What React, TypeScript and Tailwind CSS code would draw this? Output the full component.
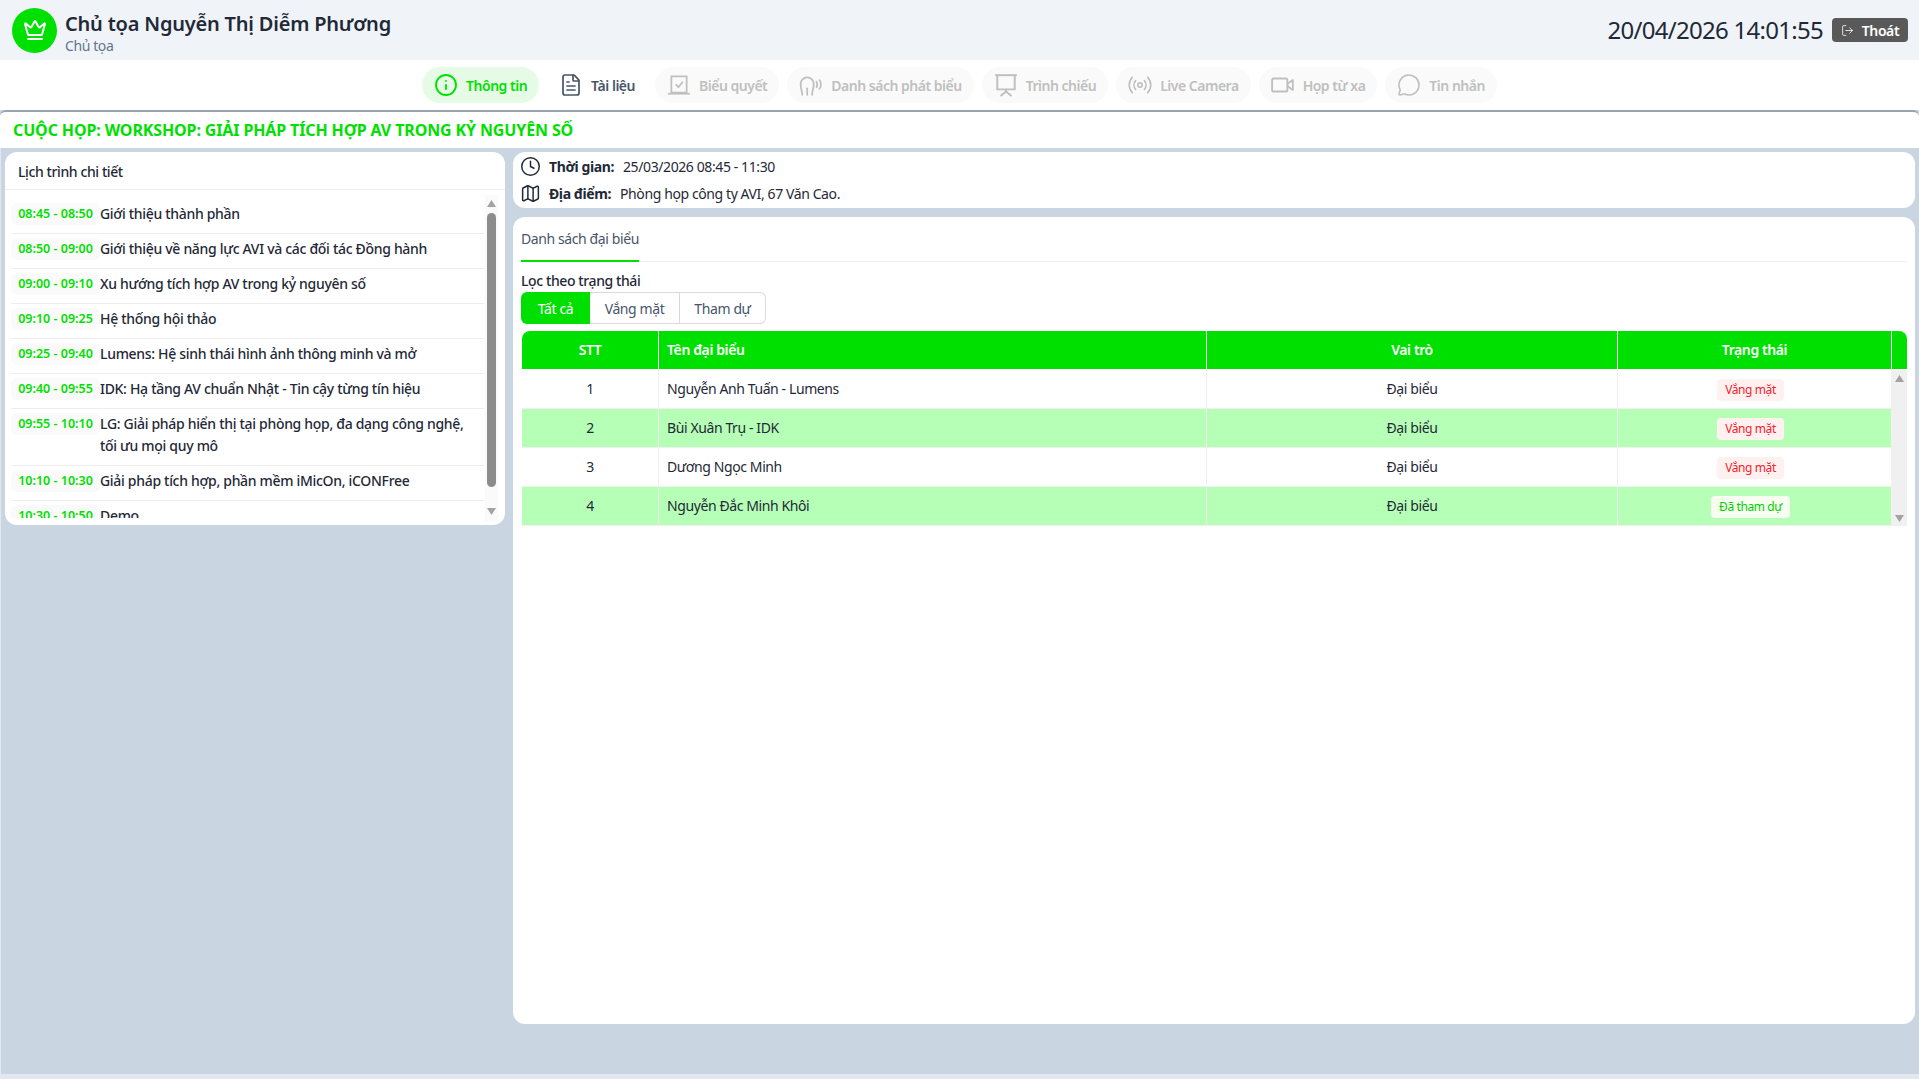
import { Clock, Crown, FileText, Info, LogOut, Map, MessageCircle } from "lucide-react";
import type { ReactNode } from "react";

const schedule = [
  { time: "08:45 - 08:50", title: "Giới thiệu thành phần" },
  { time: "08:50 - 09:00", title: "Giới thiệu về năng lực AVI và các đối tác Đồng hành" },
  { time: "09:00 - 09:10", title: "Xu hướng tích hợp AV trong kỷ nguyên số" },
  { time: "09:10 - 09:25", title: "Hệ thống hội thảo" },
  { time: "09:25 - 09:40", title: "Lumens: Hệ sinh thái hình ảnh thông minh và mở" },
  { time: "09:40 - 09:55", title: "IDK: Hạ tầng AV chuẩn Nhật - Tin cậy từng tín hiệu" },
  { time: "09:55 - 10:10", title: "LG: Giải pháp hiển thị tại phòng họp, đa dạng công nghệ, tối ưu mọi quy mô" },
  { time: "10:10 - 10:30", title: "Giải pháp tích hợp, phần mềm iMicOn, iCONFree" },
  { time: "10:30 - 10:50", title: "Demo" },
];

const delegates = [
  { id: 1, name: "Nguyễn Anh Tuấn - Lumens", attended: false },
  { id: 2, name: "Bùi Xuân Trụ - IDK", attended: false },
  { id: 3, name: "Dương Ngọc Minh", attended: false },
  { id: 4, name: "Nguyễn Đắc Minh Khôi", attended: true },
];

function VoteIcon() {
  return (
    <svg width="24" height="24" viewBox="0 0 22 22" fill="none" stroke="currentColor" strokeWidth="1.6">
      <path d="M4 3h14v15H4z" />
      <path d="M1 19h20" />
      <path d="M8 10.5l2.5 2.5L14.5 8" />
    </svg>
  );
}

function SpeakerIcon() {
  return (
    <svg width="24" height="24" viewBox="0 0 22 22" fill="none" stroke="currentColor" strokeWidth="1.6" strokeLinecap="round">
      <path d="M3 20c0-3-1.5-5-1.5-10a6 6 0 0 1 12 0c0 4-1.5 6-1.5 10" />
      <path d="M7.5 14v6" />
      <path d="M16 8c1 1.300 1 3.700 0 5" />
      <path d="M18.800 6.500c1.700 2.200 1.700 5.800 0 8" />
    </svg>
  );
}

function ScreenIcon() {
  return (
    <svg width="24" height="24" viewBox="0 0 22 22" fill="none" stroke="currentColor" strokeWidth="1.800">
      <path d="M1 2h20" />
      <path d="M3 2v13h16V2" />
      <path d="M11 15v2l-5 4M11 17l5 4" />
    </svg>
  );
}

function CameraIcon() {
  return (
    <svg width="24" height="24" viewBox="0 0 22 22" fill="none" stroke="currentColor" strokeWidth="1.500" strokeLinecap="round">
      <circle cx="11" cy="11" r="2" />
      <path d="M7 7a6 6 0 0 0 0 8M15 7a6 6 0 0 1 0 8" />
      <path d="M4 4a10 10 0 0 0 0 14M18 4a10 10 0 0 1 0 14" />
    </svg>
  );
}

function VideoIcon() {
  return (
    <svg width="24" height="24" viewBox="0 0 22 22" fill="none" stroke="currentColor" strokeWidth="1.700" strokeLinejoin="round">
      <rect x="1" y="5" width="14" height="12" rx="1.500" />
      <path d="M15 10l5-3.500v9L15 12" />
    </svg>
  );
}

function NavPill({ icon, label, state }: { icon: ReactNode; label: string; state: "active" | "normal" | "disabled" }) {
  const tone =
    state === "active"
      ? "bg-[#e6fbe6] text-[#00e000]"
      : state === "normal"
        ? "text-[#475569]"
        : "bg-[#fafafa] text-[#bfbfbf]";
  return (
    <div className={`flex h-9 items-center gap-2 rounded-[18px] px-3 text-[14px] font-semibold tracking-[-0.035em] whitespace-nowrap ${tone}`}>
      {icon}
      <span>{label}</span>
    </div>
  );
}

function ScrollArrow({ down }: { down?: boolean }) {
  return (
    <svg width="9" height="7" viewBox="0 0 9 7" className="fill-[#a3a3a3]">
      <path d={down ? "M0 0h9L4.500 7z" : "M4.500 0L9 7H0z"} />
    </svg>
  );
}

export default function App() {
  return (
    <div className="flex h-[1079px] w-full flex-col overflow-hidden bg-[#c9d5e1] font-['Noto_Sans',sans-serif] tracking-[-0.025em] text-[#1f2937]">
      {/* Top header */}
      <header className="flex h-[60px] shrink-0 items-center justify-between bg-[#f0f4f9] pr-[11px] pl-3">
        <div className="flex items-center gap-2">
          <div className="flex h-[45px] w-[45px] items-center justify-center rounded-full bg-[#00e000]">
            <Crown size={24} className="text-white" strokeWidth={2} />
          </div>
          <div className="pt-[5px]">
            <div className="text-[20px] leading-[26px] font-semibold tracking-[-0.01em] text-[#1f2937]">Chủ tọa Nguyễn Thị Diễm Phương</div>
            <div className="text-[14px] leading-[18px] text-[#64748b]">Chủ tọa</div>
          </div>
        </div>
        <div className="flex items-center gap-[9px]">
          <span className="text-[24px] leading-8 tracking-[-0.03em] text-[#1f2937]">20/04/2026 14:01:55</span>
          <div className="flex h-6 w-[76px] items-center justify-center gap-2 rounded bg-[#595959] text-[14px] font-semibold text-white">
            <LogOut size={13} strokeWidth={1.500} />
            <span>Thoát</span>
          </div>
        </div>
      </header>

      {/* Tabs */}
      <nav className="flex h-[50px] shrink-0 items-center justify-center gap-2 bg-white">
        <NavPill state="active" label="Thông tin" icon={<Info size={24} strokeWidth={1.800} />} />
        <NavPill state="normal" label="Tài liệu" icon={<FileText size={24} strokeWidth={1.700} />} />
        <NavPill state="disabled" label="Biểu quyết" icon={<VoteIcon />} />
        <NavPill state="disabled" label="Danh sách phát biểu" icon={<SpeakerIcon />} />
        <NavPill state="disabled" label="Trình chiếu" icon={<ScreenIcon />} />
        <NavPill state="disabled" label="Live Camera" icon={<CameraIcon />} />
        <NavPill state="disabled" label="Họp từ xa" icon={<VideoIcon />} />
        <NavPill state="disabled" label="Tin nhắn" icon={<MessageCircle size={24} strokeWidth={1.600} />} />
      </nav>

      {/* Meeting title */}
      <div className="flex h-[38px] shrink-0 items-center rounded-t-md border-t-2 border-[#9aa3af] bg-white pl-[13px] text-[16px] font-bold tracking-[-0.008em] text-[#00e000]">
        CUỘC HỌP: WORKSHOP: GIẢI PHÁP TÍCH HỢP AV TRONG KỶ NGUYÊN SỐ
      </div>

      <div className="flex flex-1 items-start gap-2 border-l border-[#e2e8f0] pt-1 pr-1 pl-1">
        {/* Schedule */}
        <section className="flex h-[373px] w-[500px] shrink-0 flex-col overflow-hidden rounded-xl bg-white">
          <div className="flex h-[38px] shrink-0 items-center border-b border-[#eeeeee] pt-0.5 pl-[13px] text-[14px] font-medium">
            Lịch trình chi tiết
          </div>
          <div className="relative min-h-0 flex-1">
            <div className="h-[328px] overflow-hidden pt-[9px] pr-[21px] pl-1.5">
              {schedule.map((item, i) => (
                <div
                  key={item.time}
                  className={`flex pt-1 pb-2 ${i < schedule.length - 1 ? "border-b border-[#eeeeee]" : ""}`}
                >
                  <span className="h-[22px] w-[89px] shrink-0 rounded-md bg-[#fafafa] text-center text-[12.500px] leading-[22px] font-semibold tracking-normal text-[#00e000]">
                    {item.time}
                  </span>
                  <span className="pr-[11px] text-[14px] leading-[22px] font-medium tracking-[-0.022em]">{item.title}</span>
                </div>
              ))}
            </div>
            {/* Scrollbar */}
            <div className="absolute top-[5px] right-[7px] flex h-[326px] w-[13px] flex-col items-center bg-[#fafafa] pt-[5px]">
              <ScrollArrow />
              <div className="mt-1.5 h-[274px] w-[9px] rounded-full bg-[#8c8c8c]" />
              <div className="mt-[21px]">
                <ScrollArrow down />
              </div>
            </div>
          </div>
        </section>

        <div className="flex min-w-0 flex-1 flex-col gap-[9px]">
          {/* Time and place */}
          <section className="flex h-14 flex-col rounded-xl bg-white pl-[7px] text-[14px]">
            <div className="flex h-7 items-center">
              <Clock size={21} strokeWidth={1.700} className="shrink-0" />
              <span className="ml-2 font-bold">Thời gian:</span>
              <span className="ml-[9px]">25/03/2026 08:45 - 11:30</span>
            </div>
            <div className="-mt-px flex h-7 items-center">
              <Map size={21} strokeWidth={1.700} className="shrink-0" />
              <span className="ml-2 font-bold">Địa điểm:</span>
              <span className="ml-[9px]">Phòng họp công ty AVI, 67 Văn Cao.</span>
            </div>
          </section>

          {/* Delegates */}
          <section className="h-[807px] rounded-xl bg-white px-2">
            <div className="flex h-[45px] border-b border-[#f0f0f0]">
              <div className="h-[45px] border-b-2 border-[#00e000] pt-[11px] text-[14px] leading-[22px] text-[#475569]">
                Danh sách đại biểu
              </div>
            </div>
            <div className="mt-[9px] text-[14px] leading-[20px] font-medium">Lọc theo trạng thái</div>
            <div className="mt-px flex h-8 text-[14px] text-[#475569]">
              <div className="flex w-[69px] items-center justify-center rounded-l-md bg-[#00e000] text-white">Tất cả</div>
              <div className="flex w-[90px] items-center justify-center border-y border-r border-[#d9d9d9]">Vắng mặt</div>
              <div className="flex w-[86px] items-center justify-center rounded-r-md border-y border-r border-[#d9d9d9]">Tham dự</div>
            </div>

            <div className="mt-[7px] ml-px w-[1385px]">
              <div className="flex h-[38px] items-center rounded-t-lg bg-[#00e000] text-[14px] font-semibold text-white">
                <div className="flex h-full w-[137px] items-center justify-center border-r border-white pb-px">STT</div>
                <div className="flex h-full w-[548px] items-center border-r border-white pb-px pl-2">Tên đại biểu</div>
                <div className="flex h-full w-[411px] items-center justify-center border-r border-white pb-px">Vai trò</div>
                <div className="flex h-full w-[274px] items-center justify-center border-r border-white pb-px">Trạng thái</div>
              </div>
              <div className="mt-px flex">
                <div className="w-[1370px] text-[14px]">
                  {delegates.map((d) => (
                    <div
                      key={d.id}
                      className={`flex h-[39px] items-center border-b border-[#f0f0f0] ${d.id % 2 === 0 ? "bg-[#b6ffb6]" : "bg-white"}`}
                    >
                      <div className="flex h-full w-[137px] items-center justify-center border-r border-[#f0f0f0] pb-px">{d.id}</div>
                      <div className="flex h-full w-[548px] items-center border-r border-[#f0f0f0] pb-px pl-2">{d.name}</div>
                      <div className="flex h-full w-[411px] items-center justify-center border-r border-[#f0f0f0] pb-px">Đại biểu</div>
                      <div className="flex h-full w-[274px] items-center justify-center border-r border-[#f0f0f0] pt-px">
                        <span
                          className={`mr-2 rounded px-2 text-[12px] leading-[22px] ${d.attended ? "bg-[#f6fff0] text-[#00d000]" : "bg-[#fff1f0] text-[#f5222d]"}`}
                        >
                          {d.attended ? "Đã tham dự" : "Vắng mặt"}
                        </span>
                      </div>
                    </div>
                  ))}
                </div>
                <div className="flex h-[156px] w-[15px] flex-col items-center justify-between bg-[#f0f0f0] pt-[5px] pb-1">
                  <ScrollArrow />
                  <ScrollArrow down />
                </div>
              </div>
            </div>
          </section>
        </div>
      </div>
      <div className="h-[5px] shrink-0 bg-[#e2e8f0]" />
    </div>
  );
}
